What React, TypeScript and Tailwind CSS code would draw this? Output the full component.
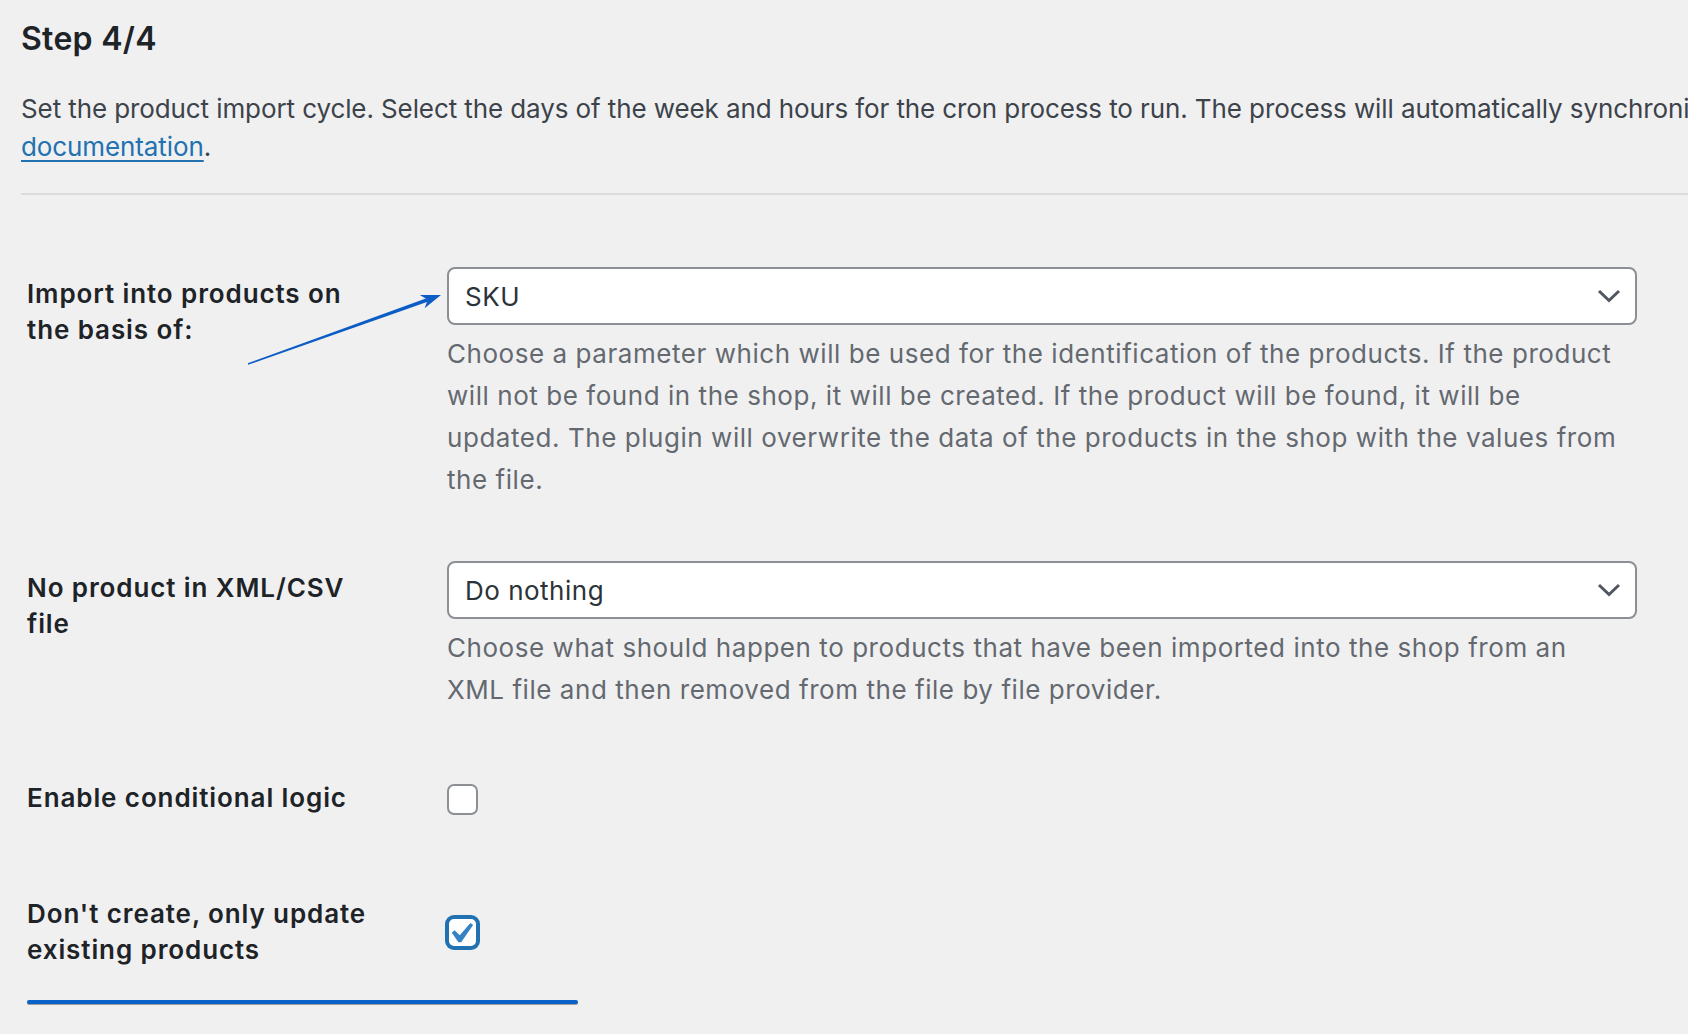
import React from "react";

function Chevron() {
  return (
    <svg width="24" height="14" viewBox="0 0 24 14" className="shrink-0">
      <polyline points="2,2 12,11.5 22,2" fill="none" stroke="#50575e" strokeWidth="3" />
    </svg>
  );
}

function SelectBox({ value }: { value: string }) {
  return (
    <div className="flex h-[58px] w-[1190px] items-center justify-between rounded-[8px] border-2 border-[#8c8f94] bg-white pl-[16px] pr-[14px]">
      <span className="text-[26px] tracking-[0.5px] text-[#2c3338]">{value}</span>
      <Chevron />
    </div>
  );
}

function Checkbox({ checked }: { checked?: boolean }) {
  if (checked) {
    return (
      <div className="flex h-[31px] w-[31px] items-center justify-center rounded-[7px] border-2 border-[#2271b1] bg-white ring-2 ring-[#2271b1]">
        <svg width="23" height="21" viewBox="5.4 4.4 11.2 10.2">
          <path d="M14.83 4.89l1.34.94-5.81 8.38H9.02L5.78 9.67l1.34-1.25 2.57 2.4z" fill="#3582c4" />
        </svg>
      </div>
    );
  }
  return <div className="h-[31px] w-[31px] rounded-[7px] border-2 border-[#8c8f94] bg-white" />;
}

function Label({ lines }: { lines: string[] }) {
  return (
    <div className="whitespace-nowrap pl-[6px] text-[26px] font-semibold leading-[36px] tracking-[0.9px] text-[#1d2327]">
      {lines.map((l) => (
        <div key={l}>{l}</div>
      ))}
    </div>
  );
}

function Description({ lines }: { lines: string[] }) {
  return (
    <div className="mt-[8px] whitespace-nowrap text-[26px] leading-[42px] tracking-[0.55px] text-[#646970]">
      {lines.map((l) => (
        <div key={l}>{l}</div>
      ))}
    </div>
  );
}

export default function App() {
  return (
    <div
      className="relative h-[1034px] w-[1688px] overflow-hidden bg-[#f0f0f1] pl-[21px] pt-[21px]"
      style={{ fontFamily: "Inter, 'Noto Sans', sans-serif" }}
    >
      <h2 className="text-[32px] font-semibold leading-[36px] tracking-[0.3px] text-[#1d2327]">Step 4/4</h2>

      <p className="mt-[33px] whitespace-nowrap text-[26px] leading-[38px] tracking-[-0.1px] text-[#3c434a]">
        Set the product import cycle. Select the days of the week and hours for the cron process to run. The process will automatically synchronize the products. More in the
        <br />
        <a className="text-[#2271b1] underline underline-offset-[4px]" href="#">
          documentation
        </a>
        .
      </p>

      <div className="mt-[27px] h-[2px] w-[1700px] bg-[#dcdcde]" />

      <div className="mt-[72px] grid grid-cols-[426px_1190px]">
        <div className="pt-[9px]">
          <Label lines={["Import into products on", "the basis of:"]} />
        </div>
        <div>
          <SelectBox value="SKU" />
          <Description
            lines={[
              "Choose a parameter which will be used for the identification of the products. If the product",
              "will not be found in the shop, it will be created. If the product will be found, it will be",
              "updated. The plugin will overwrite the data of the products in the shop with the values from",
              "the file.",
            ]}
          />
        </div>
      </div>

      <div className="mt-[60px] grid grid-cols-[426px_1190px]">
        <div className="pt-[9px]">
          <Label lines={["No product in XML/CSV", "file"]} />
        </div>
        <div>
          <SelectBox value="Do nothing" />
          <Description
            lines={[
              "Choose what should happen to products that have been imported into the shop from an",
              "XML file and then removed from the file by file provider.",
            ]}
          />
        </div>
      </div>

      <div className="mt-[69px] grid grid-cols-[426px_1190px]">
        <Label lines={["Enable conditional logic"]} />
        <div className="pt-[4px]">
          <Checkbox />
        </div>
      </div>

      <div className="mt-[80px] grid grid-cols-[426px_1190px] items-center">
        <Label lines={["Don't create, only update", "existing products"]} />
        <div>
          <Checkbox checked />
        </div>
      </div>

      <div className="ml-[6px] mt-[32px] h-[4px] w-[551px] rounded-full bg-[#0a62c9] shadow-[0_1px_0_rgba(0,0,0,0.35)]" />

      <svg
        className="pointer-events-none absolute left-0 top-0"
        width="1688"
        height="1034"
        viewBox="0 0 1688 1034"
      >
        <polygon
          points="248.2,364.7 247.8,363.3 427.2,298.0 428.4,301.4"
          fill="#0b5cc5"
        />
        <polygon points="441,295 419.8,295.1 427.8,299.7 424.6,308.3" fill="#0b5cc5" />
      </svg>
    </div>
  );
}
